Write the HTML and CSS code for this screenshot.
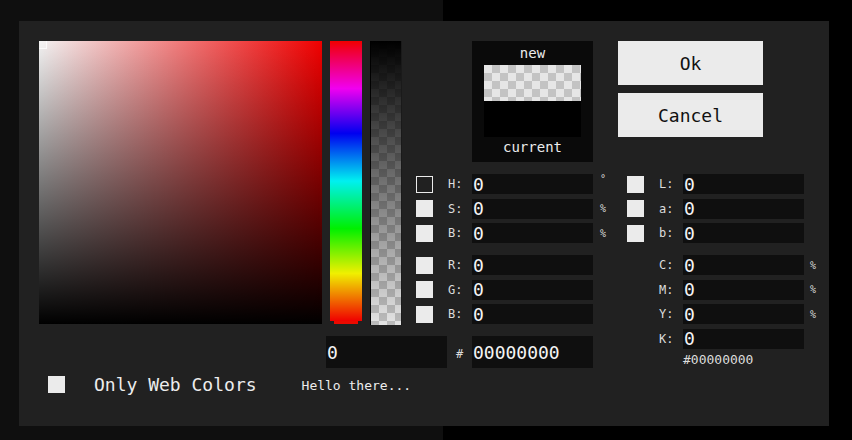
FILE: index.html
```html
<!DOCTYPE html>
<html lang="en">
<head>
<meta charset="utf-8">
<title>Color Picker</title>
<link rel="stylesheet" href="styles.css">
</head>
<body>
<div class="panel">
  <div class="sv"><span class="sv-marker"></span></div>

  <div class="bars">
    <div class="hue">
      <div class="hue-strip"></div>
      <div class="hue-thumb"></div>
    </div>
    <div class="alpha"></div>
  </div>

  <div class="top">
    <div class="preview">
      <div class="pv-label pv-new">new</div>
      <div class="swatch swatch-new"></div>
      <div class="swatch swatch-cur"></div>
      <div class="pv-label pv-cur">current</div>
    </div>
    <div class="buttons">
      <button class="btn">Ok</button>
      <button class="btn">Cancel</button>
    </div>
  </div>

  <div class="fields mid">
    <div class="group">
      <div class="row"><span class="cb cb-outline"></span><span class="lbl">H:</span><input class="val" value="0"><span class="unit unit-deg">°</span></div>
      <div class="row"><span class="cb"></span><span class="lbl">S:</span><input class="val" value="0"><span class="unit">%</span></div>
      <div class="row"><span class="cb"></span><span class="lbl">B:</span><input class="val" value="0"><span class="unit">%</span></div>
    </div>
    <div class="group">
      <div class="row"><span class="cb"></span><span class="lbl">R:</span><input class="val" value="0"></div>
      <div class="row"><span class="cb"></span><span class="lbl">G:</span><input class="val" value="0"></div>
      <div class="row"><span class="cb"></span><span class="lbl">B:</span><input class="val" value="0"></div>
    </div>
  </div>

  <div class="fields right">
    <div class="group">
      <div class="row"><span class="cb"></span><span class="lbl">L:</span><input class="val" value="0"></div>
      <div class="row"><span class="cb"></span><span class="lbl">a:</span><input class="val" value="0"></div>
      <div class="row"><span class="cb"></span><span class="lbl">b:</span><input class="val" value="0"></div>
    </div>
    <div class="group">
      <div class="row"><span class="cb-empty"></span><span class="lbl">C:</span><input class="val" value="0"><span class="unit">%</span></div>
      <div class="row"><span class="cb-empty"></span><span class="lbl">M:</span><input class="val" value="0"><span class="unit">%</span></div>
      <div class="row"><span class="cb-empty"></span><span class="lbl">Y:</span><input class="val" value="0"><span class="unit">%</span></div>
      <div class="row"><span class="cb-empty"></span><span class="lbl">K:</span><input class="val" value="0"></div>
    </div>
    <div class="hex-note">#00000000</div>
  </div>

  <div class="hexrow">
    <input class="val val-big" value="0">
    <span class="hash">#</span>
    <input class="val val-big" value="00000000">
  </div>

  <div class="footer">
    <span class="cb"></span>
    <span class="web">Only Web Colors</span>
    <span class="hello">Hello there...</span>
  </div>
</div>
</body>
</html>
```

FILE: styles.css
```css
html {
  background: linear-gradient(to right, #0f0f0f 0, #0f0f0f 443px, #000 443px);
}
body {
  margin: 0;
  height: 440px;
  padding-top: 21px;
  box-sizing: border-box;
  font-family: "DejaVu Sans Mono", monospace;
  color: #e6e6e6;
}
.panel {
  margin-left: 19px;
  width: 810px;
  height: 405px;
  box-sizing: border-box;
  padding: 20px 0 0 20px;
  background: #212121;
  display: grid;
  grid-template-columns: 283px 94px 56px 121px 34px 1fr;
  grid-template-rows: 121px 150px 32px auto;
  row-gap: 12px;
  grid-template-areas:
    "sv bars top top top top"
    "sv bars mid mid mid right"
    ". hex hex hex hex right"
    "foot foot foot foot foot .";
}

/* saturation / brightness square */
.sv {
  grid-area: sv;
  position: relative;
  background:
    linear-gradient(to bottom, rgba(0,0,0,0), #000),
    linear-gradient(to right, #f2f2f2, #f00000);
}
.sv-marker {
  position: absolute;
  left: 0;
  top: 0;
  width: 8px;
  height: 8px;
  box-sizing: border-box;
  border-right: 1px solid rgba(255,255,255,0.7);
  border-bottom: 1px solid rgba(255,255,255,0.7);
  background: rgba(255,255,255,0.25);
}

/* hue and alpha bars */
.bars {
  grid-area: bars;
  display: flex;
  gap: 8px;
  padding-left: 8px;
}
.hue {
  width: 32px;
  display: flex;
  flex-direction: column;
}
.hue-strip {
  height: 280px;
  background: linear-gradient(to bottom, #f00000, #f000f0 17%, #0000f0 33%, #00f0f0 50%, #00f000 67%, #f0f000 83%, #f00000);
}
.hue-thumb {
  width: 24px;
  height: 3px;
  margin: 0 auto;
  background: #ea0a00;
}
.alpha {
  width: 32px;
  height: 284px;
  box-sizing: border-box;
  border-left: 1px solid #000;
  border-right: 1px solid #1a1a1a;
  background:
    linear-gradient(to bottom, #000, rgba(0,0,0,0)),
    repeating-conic-gradient(#bcbcbc 0 25%, #e4e4e4 0 50%) 0 0 / 16px 16px;
}

/* preview + buttons */
.top {
  grid-area: top;
  display: flex;
  align-items: flex-start;
  padding-left: 56px;
}
.preview {
  width: 121px;
  height: 121px;
  box-sizing: border-box;
  padding: 0 12px;
  background: #0a0a0a;
  display: flex;
  flex-direction: column;
}
.pv-label {
  font-size: 14px;
  text-align: center;
  color: #ececec;
}
.pv-new {
  height: 24px;
  line-height: 24px;
}
.pv-cur {
  line-height: 20px;
}
.swatch {
  height: 36px;
}
.swatch-new {
  background: repeating-conic-gradient(#c3c3c3 0 25%, #e6e6e6 0 50%) 0 0 / 16px 16px;
}
.swatch-cur {
  background: #000;
}
.buttons {
  margin-left: 25px;
  display: flex;
  flex-direction: column;
  gap: 8px;
}
.btn {
  width: 145px;
  height: 44px;
  border: 0;
  padding: 0;
  background: #ebebeb;
  color: #111;
  font-family: "DejaVu Sans Mono", monospace;
  font-size: 18px;
}

/* field columns */
.mid { grid-area: mid; }
.right { grid-area: right; }
.fields {
  display: flex;
  flex-direction: column;
  gap: 12px;
}
.group {
  display: flex;
  flex-direction: column;
  gap: 4.5px;
}
.row {
  height: 20px;
  display: grid;
  grid-template-columns: 17px 39px 121px auto;
  align-items: center;
}
.cb {
  width: 17px;
  height: 17px;
  box-sizing: border-box;
  background: #ebebeb;
}
.cb-outline {
  background: transparent;
  border: 1px solid #ebebeb;
}
.lbl {
  padding-left: 15px;
  font-size: 12px;
  color: #dcdcdc;
}
.val {
  width: 121px;
  height: 20px;
  box-sizing: border-box;
  border: 0;
  padding: 0 0 0 1px;
  margin: 0;
  background: #0f0f0f;
  color: #f4f4f4;
  font-family: "DejaVu Sans Mono", monospace;
  font-size: 18px;
  outline: none;
}
.unit {
  padding-left: 7px;
  font-size: 10px;
  color: #dcdcdc;
}
.unit-deg {
  align-self: start;
  line-height: 10px;
}
.right .unit {
  padding-left: 6px;
}
.hex-note {
  margin-top: -8.5px;
  padding-left: 56px;
  font-size: 13px;
  line-height: 16px;
  color: #dcdcdc;
}

/* hex row */
.hexrow {
  grid-area: hex;
  display: flex;
  align-items: center;
  padding-left: 4px;
}
.val-big {
  height: 32px;
}
.hash {
  width: 25px;
  text-align: center;
  font-size: 12px;
  color: #dcdcdc;
  padding-top: 4px;
}

/* footer */
.footer {
  grid-area: foot;
  margin-top: -4px;
  height: 17px;
  display: flex;
  align-items: center;
  padding-left: 9px;
}
.web {
  margin-left: 29px;
  font-size: 18px;
  color: #ededed;
}
.hello {
  margin-left: 45px;
  font-size: 13px;
  color: #ededed;
  padding-top: 2px;
}
```
